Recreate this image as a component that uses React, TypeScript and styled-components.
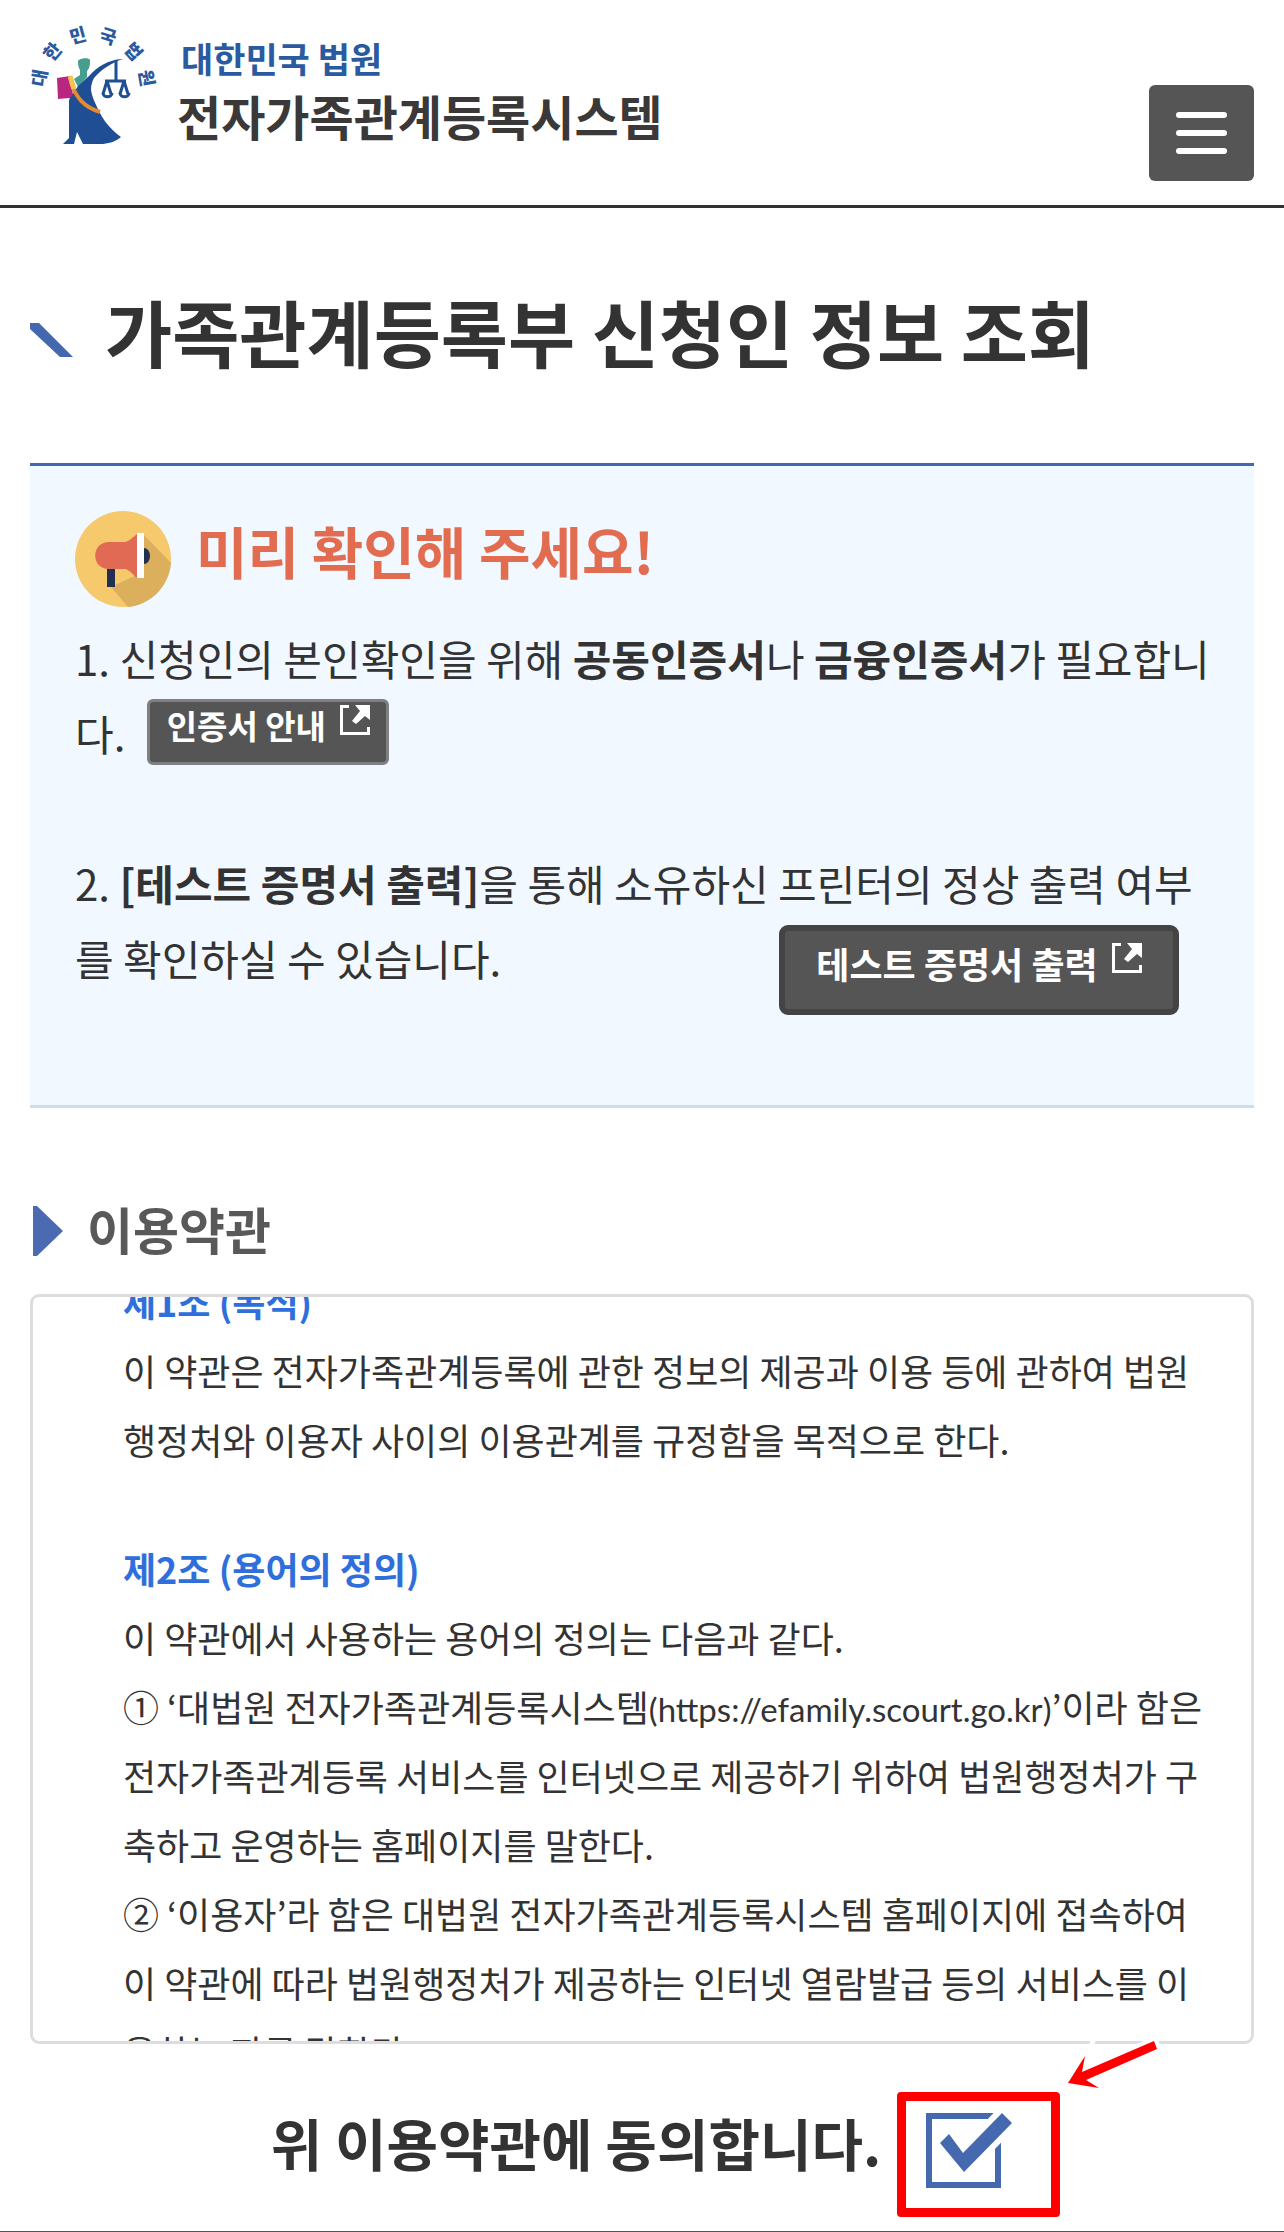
import React, { useLayoutEffect, useRef, useState } from "react";
import styled, { createGlobalStyle } from "styled-components";

const GlobalStyle = createGlobalStyle`
  *, *::before, *::after { box-sizing: border-box; }
  body {
    margin: 0;
    background: #fff;
    color: #333;
    font-family: "Noto Sans CJK KR", "Noto Sans", sans-serif;
    font-weight: 400;
  }
  h1, h2, h3, p { margin: 0; padding: 0; }
  button { font-family: inherit; }
`;

const Header = styled.header`
  display: flex;
  justify-content: space-between;
  align-items: flex-start;
  height: 208px;
  padding: 0 30px;
  border-bottom: 3px solid #333032;
`;

const Brand = styled.a`
  display: flex;
  gap: 20px;
  padding-top: 26px;
  color: inherit;
  text-decoration: none;
`;

const BrandText = styled.span`
  display: flex;
  flex-direction: column;
  padding-top: 7px;
`;

const BrandOwner = styled.span`
  padding-left: 4px;
  font-size: 35px;
  line-height: 50px;
  font-weight: 700;
  color: #2a5a9f;
`;

const BrandName = styled.span`
  font-size: 48px;
  line-height: 64px;
  font-weight: 700;
  color: #3a3838;
`;

const MenuButton = styled.button`
  display: flex;
  flex-direction: column;
  justify-content: center;
  align-items: center;
  gap: 12px;
  width: 105px;
  height: 96px;
  margin-top: 85px;
  padding: 0;
  border: 0;
  border-radius: 6px;
  background: #555;
`;

const MenuBar = styled.span`
  width: 51px;
  height: 6px;
  border-radius: 3px;
  background: #fff;
`;

const Main = styled.main`
  padding: 0 30px;
`;

const PageTitle = styled.h1`
  display: flex;
  align-items: center;
  gap: 32px;
  padding: 67px 0 77px;
  font-size: 73px;
  line-height: 111px;
  font-weight: 700;
`;

const TitleMark = styled.svg`
  width: 43px;
  height: 36px;
  margin-top: 18px;
`;

const Notice = styled.section`
  padding: 45px 40px 0 45px;
  border-top: 3px solid #4169ad;
  border-bottom: 3px solid #cfdcec;
  background: #f1f8ff;
`;

const NoticeHead = styled.div`
  display: flex;
  gap: 25px;
  margin-bottom: 13px;
`;

const NoticeTitle = styled.h2`
  font-size: 56px;
  line-height: 78px;
  font-weight: 700;
  color: #e16c50;
`;

const NoticeItem = styled.p<{ $space: number }>`
  display: flow-root;
  padding-bottom: ${(p) => p.$space}px;
  font-size: 42px;
  line-height: 75px;
`;

const Strong = styled.strong`
  font-weight: 700;
`;

const LinkButton = styled.button<{ $large?: boolean }>`
  display: inline-flex;
  align-items: flex-start;
  justify-content: center;
  gap: 14px;
  float: ${(p) => (p.$large ? "right" : "none")};
  vertical-align: top;
  width: ${(p) => (p.$large ? 400 : 242)}px;
  height: ${(p) => (p.$large ? 90 : 66)}px;
  margin: ${(p) => (p.$large ? "5px 35px 0 0" : "4px 0 0 22px")};
  padding: ${(p) => (p.$large ? "12px 0 0" : "3px 0 0")};
  border: ${(p) => (p.$large ? "6px solid #444" : "3px solid #808080")};
  border-radius: ${(p) => (p.$large ? 9 : 6)}px;
  background: #555;
  color: #fff;
  font-size: ${(p) => (p.$large ? 36 : 33)}px;
  line-height: 40px;
  font-weight: 700;
`;

const SectionTitle = styled.h2`
  display: flex;
  align-items: center;
  gap: 24px;
  padding: 80px 0 26px 3px;
  font-size: 50px;
  line-height: 80px;
  font-weight: 700;
  color: #595959;
`;

const SectionMark = styled.svg`
  width: 30px;
  height: 50px;
  margin-top: 6px;
`;

const TermsBox = styled.section`
  height: 750px;
  padding: 40px 36px 40px 90px;
  border: 3px solid #ddd;
  border-radius: 9px;
  overflow-y: auto;
  scrollbar-width: none;
  font-size: 36px;
  line-height: 69px;
`;

const Article = styled.article`
  & + & { margin-top: 60px; }
`;

const ArticleTitle = styled.h3`
  font-size: 36px;
  line-height: 69px;
  font-weight: 700;
  color: #2f6fdb;
`;

const Url = styled.span`
  font-family: Lato, sans-serif;
  font-size: 33px;
  line-height: 40px;
`;

const Agreement = styled.div`
  display: flex;
  justify-content: center;
  align-items: center;
  gap: 16px;
  padding: 48px 0 14px 47px;
`;

const AgreementLabel = styled.label`
  padding-bottom: 26px;
  font-size: 56px;
  line-height: 86px;
  font-weight: 700;
`;

const Highlight = styled.span`
  position: relative;
  display: flex;
  align-items: center;
  width: 163px;
  height: 125px;
  padding: 0 0 8px 20px;
  border: 9px solid #f00;
  border-radius: 4px;
`;

const CheckWrap = styled.span`
  display: grid;
  & > * { grid-area: 1 / 1; }
`;

const Checkbox = styled.input`
  appearance: none;
  width: 75px;
  height: 75px;
  margin: 0;
  border: 6px solid #4469ae;
  background: #fff;
`;

const CheckMark = styled.svg`
  width: 86px;
  height: 75px;
  pointer-events: none;
`;

const Pointer = styled.svg`
  position: absolute;
  left: 158px;
  top: -65px;
  width: 100px;
  height: 60px;
`;

const Footer = styled.footer`
  border-top: 1px solid #555;
`;

const emblemLetters = [
  { char: "대", x: 10, y: 52, turn: -80 },
  { char: "한", x: 23, y: 26, turn: -50 },
  { char: "민", x: 48, y: 10, turn: -15 },
  { char: "국", x: 78, y: 11, turn: 17 },
  { char: "법", x: 103, y: 26, turn: 48 },
  { char: "원", x: 116, y: 52, turn: 80 },
];

const EmblemLetter = styled.text`
  fill: #2a5a9f;
  font-size: 18px;
  font-weight: 900;
  text-anchor: middle;
`;

const Emblem = () => (
  <svg width="127" height="122" viewBox="0 0 127 122" overflow="visible" aria-hidden="true">
    {emblemLetters.map((l) => (
      <EmblemLetter key={l.char} y="6" transform={`translate(${l.x} ${l.y}) rotate(${l.turn})`}>
        {l.char}
      </EmblemLetter>
    ))}
    <path d="M48 35c1-3 11-4 12-1 0 5 0 8-3 11v6l-9 10-4-8 6-4v-5c-2-3-2-6-2-9z" fill="#469f8e" />
    <path d="M27 52l13-2 4 25-5-3-11 1z" fill="#b92680" />
    <path d="M92 33c-14 1-24 7-33 17L48 60l-9 14v38l-6 6h11l3-12 6 12h20c8-1 13-3 18-7-8-6-16-14-21-24-4-8-8-16-9-23 0-5 1-8 3-12 8-9 17-15 29-19z" fill="#1f4e94" />
    <path d="M41 56c5 16 13 25 29 30" fill="none" stroke="#e38b2e" strokeWidth="4" />
    <path d="M40 50l4 13" stroke="#f5c451" strokeWidth="5" />
    <g fill="none" stroke="#1f4e94" strokeWidth="3">
      <path d="M86 34v20M75 55h21M77 55l-4 13M77 55l4 13M94 55l-4 13M94 55l4 13" />
      <path d="M73 67c0 5 9 5 9 0M90 67c0 5 9 5 9 0" />
    </g>
  </svg>
);

const Megaphone = () => (
  <svg width="96" height="96" viewBox="0 0 96 96" aria-hidden="true">
    <circle cx="48" cy="48" r="48" fill="#f6c96c" />
    <path d="M69 24l27 28c-2 23-20 42-43 44L36 76l30-14z" fill="#dbaf5c" />
    <ellipse cx="69" cy="45" rx="6" ry="8" fill="#22304f" />
    <path d="M32 56h8v20h-8z" fill="#22304f" />
    <path d="M33 31h17c5-1 8-5 12-8v44c-4-3-7-8-12-9H33c-17-1-17-26 0-27z" fill="#e06a53" />
    <path d="M62 22h7v45h-7z" fill="#fff" />
  </svg>
);

const ExternalIcon = () => (
  <svg width="30" height="30" viewBox="0 0 30 30" aria-hidden="true">
    <path d="M9 1.5H1.5v27h27V22" fill="none" stroke="#fff" strokeWidth="3" />
    <path d="M15 0h15v15l-5-4-9 8-4-3 8-10z" fill="#fff" />
  </svg>
);

export default function App() {
  const termsRef = useRef<HTMLElement>(null);
  const [agreed, setAgreed] = useState(true);

  useLayoutEffect(() => {
    if (termsRef.current) termsRef.current.scrollTop = 70;
  }, []);

  return (
    <>
      <GlobalStyle />
      <Header>
        <Brand href="#">
          <Emblem />
          <BrandText>
            <BrandOwner>대한민국 법원</BrandOwner>
            <BrandName>전자가족관계등록시스템</BrandName>
          </BrandText>
        </Brand>
        <MenuButton type="button">
          <MenuBar />
          <MenuBar />
          <MenuBar />
        </MenuButton>
      </Header>

      <Main>
        <PageTitle>
          <TitleMark viewBox="0 0 43 36" aria-hidden="true">
            <path d="M0 1h9l34 34H30L0 7z" fill="#4468ae" />
          </TitleMark>
          가족관계등록부 신청인 정보 조회
        </PageTitle>

        <Notice>
          <NoticeHead>
            <Megaphone />
            <NoticeTitle>미리 확인해 주세요!</NoticeTitle>
          </NoticeHead>
          <NoticeItem $space={75}>
            1. 신청인의 본인확인을 위해 <Strong>공동인증서</Strong>나 <Strong>금융인증서</Strong>가 필요합니다.
            <LinkButton type="button">
              인증서 안내
              <ExternalIcon />
            </LinkButton>
          </NoticeItem>
          <NoticeItem $space={90}>
            2. <Strong>[테스트 증명서 출력]</Strong>을 통해 소유하신 프린터의 정상 출력 여부를 확인하실 수 있습니다.
            <LinkButton type="button" $large>
              테스트 증명서 출력
              <ExternalIcon />
            </LinkButton>
          </NoticeItem>
        </Notice>

        <SectionTitle>
          <SectionMark viewBox="0 0 30 50" aria-hidden="true">
            <path d="M0 0h4l26 25L4 50H0z" fill="#4a6ab2" />
          </SectionMark>
          이용약관
        </SectionTitle>

        <TermsBox ref={termsRef} tabIndex={0}>
          <Article>
            <ArticleTitle>제1조 (목적)</ArticleTitle>
            <p>
              이 약관은 전자가족관계등록에 관한 정보의 제공과 이용 등에 관하여 법원행정처와 이용자 사이의 이용관계를 규정함을 목적으로 한다.
            </p>
          </Article>
          <Article>
            <ArticleTitle>제2조 (용어의 정의)</ArticleTitle>
            <p>이 약관에서 사용하는 용어의 정의는 다음과 같다.</p>
            <p>
              ① ‘대법원 전자가족관계등록시스템<Url>(https://efamily.scourt.go.kr)</Url>’이라 함은 전자가족관계등록 서비스를 인터넷으로 제공하기 위하여 법원행정처가 구축하고 운영하는 홈페이지를 말한다.
            </p>
            <p>
              ② ‘이용자’라 함은 대법원 전자가족관계등록시스템 홈페이지에 접속하여 이 약관에 따라 법원행정처가 제공하는 인터넷 열람발급 등의 서비스를 이용하는 자를 말한다.
            </p>
          </Article>
        </TermsBox>

        <Agreement>
          <AgreementLabel htmlFor="agree">위 이용약관에 동의합니다.</AgreementLabel>
          <Highlight>
            <CheckWrap>
              <Checkbox
                id="agree"
                type="checkbox"
                checked={agreed}
                onChange={(e) => setAgreed(e.target.checked)}
              />
              {agreed && (
                <CheckMark viewBox="0 0 86 75" aria-hidden="true">
                  <path
                    d="M14 30l9-9 14 19L76 0l10 10-48 49z"
                    fill="#4469ae"
                    stroke="#fff"
                    strokeWidth="12"
                    paintOrder="stroke"
                  />
                </CheckMark>
              )}
            </CheckWrap>
            <Pointer viewBox="0 0 100 60" aria-hidden="true">
              <path d="M25 9l2-5h5l-2 5z" fill="#fff" />
              <path
                d="M4 47l17-27-3 16L90 5l3 8-71 31 13 8z"
                fill="#f00"
                stroke="#fff"
                strokeWidth="8"
                paintOrder="stroke"
              />
            </Pointer>
          </Highlight>
        </Agreement>
      </Main>
      <Footer />
    </>
  );
}
